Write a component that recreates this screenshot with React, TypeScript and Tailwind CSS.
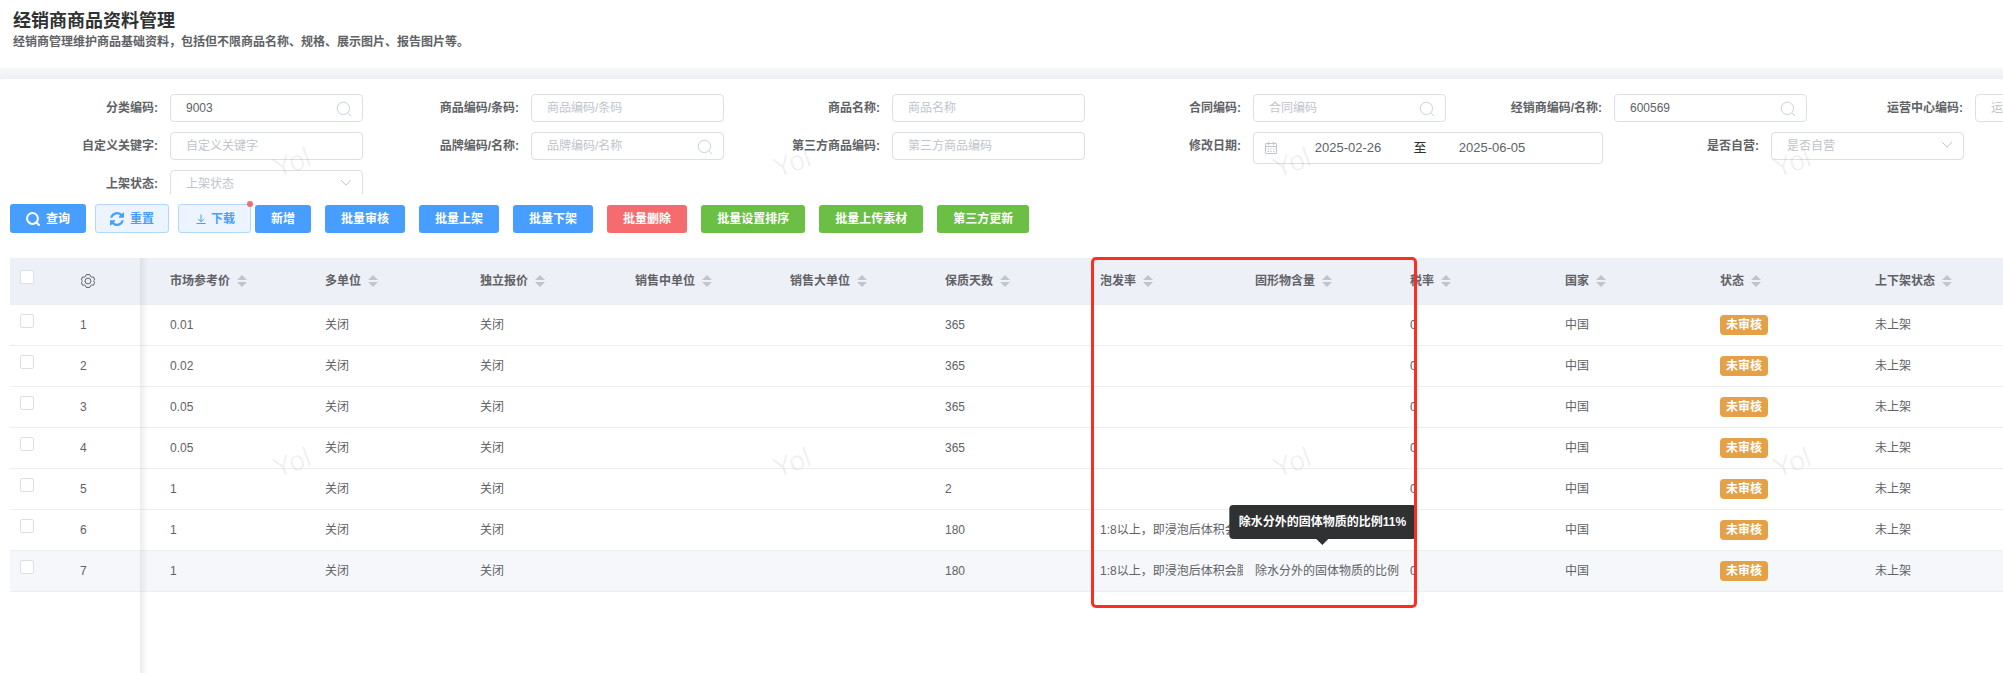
import { useId } from "react";

type Field = {
  label: string;
  value?: string;
  kind?: "text" | "search" | "select" | "date";
};

const fieldRows: Field[][] = [
  [
    { label: "分类编码", value: "9003", kind: "search" },
    { label: "商品编码/条码" },
    { label: "商品名称" },
    { label: "合同编码", kind: "search" },
    { label: "经销商编码/名称", value: "600569", kind: "search" },
    { label: "运营中心编码", kind: "search" },
  ],
  [
    { label: "自定义关键字" },
    { label: "品牌编码/名称", kind: "search" },
    { label: "第三方商品编码" },
    { label: "修改日期", kind: "date" },
    { label: "是否自营", kind: "select" },
  ],
  [{ label: "上架状态", kind: "select" }],
];

const actions = [
  { text: "新增", color: "bg-[#479eff]" },
  { text: "批量审核", color: "bg-[#479eff]" },
  { text: "批量上架", color: "bg-[#479eff]" },
  { text: "批量下架", color: "bg-[#479eff]" },
  { text: "批量删除", color: "bg-[#f46c6e]" },
  { text: "批量设置排序", color: "bg-[#6abf44]" },
  { text: "批量上传素材", color: "bg-[#6abf44]" },
  { text: "第三方更新", color: "bg-[#6abf44]" },
];

const columns = [
  "市场参考价",
  "多单位",
  "独立报价",
  "销售中单位",
  "销售大单位",
  "保质天数",
  "泡发率",
  "固形物含量",
  "税率",
  "国家",
  "状态",
  "上下架状态",
];

const soak = "1:8以上，即浸泡后体积会膨";
const solid = "除水分外的固体物质的比例11%";

const products = [
  { price: "0.01", days: "365", soak: "", solid: "" },
  { price: "0.02", days: "365", soak: "", solid: "" },
  { price: "0.05", days: "365", soak: "", solid: "" },
  { price: "0.05", days: "365", soak: "", solid: "" },
  { price: "1", days: "2", soak: "", solid: "" },
  { price: "1", days: "180", soak, solid: "" },
  { price: "1", days: "180", soak, solid },
];

const SearchIcon = ({ className, stroke }: { className: string; stroke: number }) => (
  <svg viewBox="0 0 16 16" fill="none" stroke="currentColor" strokeWidth={stroke} className={className}>
    <circle cx="7.4" cy="7.4" r="6.2" />
    <path d="M12 12l2.800 2.800" strokeLinecap="round" />
  </svg>
);

const RefreshIcon = () => (
  <svg viewBox="0 0 1536 1536" fill="currentColor" className="size-[14px]">
    <path d="M1511 928q0 5-1 7-64 268-268 434.500t-478 166.500q-146 0-282.500-55t-243.500-157l-129 129q-19 19-45 19t-45-19-19-45v-448q0-26 19-45t45-19h448q26 0 45 19t19 45-19 45l-137 137q71 66 161 102t187 36q134 0 250-65t186-179q11-17 53-117 8-23 30-23h192q13 0 22.500 9.500t9.500 22.500zm25-800v448q0 26-19 45t-45 19h-448q-26 0-45-19t-19-45 19-45l138-138q-148-137-349-137-134 0-250 65t-186 179q-11 17-53 117-8 23-30 23h-199q-13 0-22.500-9.500t-9.500-22.500v-7q65-268 270-434.500t480-166.500q146 0 284 55.500t245 156.500l130-129q19-19 45-19t45 19 19 45z" />
  </svg>
);

const ChevronIcon = () => (
  <svg
    viewBox="0 0 12 12"
    fill="none"
    stroke="currentColor"
    className="pointer-events-none absolute top-[7px] right-[11px] size-3 text-[#c0c4cc]"
  >
    <path d="M1.200 3.200L6 8.200l4.800-5" />
  </svg>
);

const CalendarIcon = () => (
  <svg viewBox="0 0 14 14" fill="none" stroke="currentColor" className="size-[14px] text-[#c0c4cc]">
    <rect x="1.500" y="2.500" width="11" height="10" rx="0.500" />
    <path d="M1.500 5.500h11M4.500 1v3M9.500 1v3M3.500 8h1.500M6.200 8h1.500M9 8h1.500M3.500 10.500h1.500M6.200 10.500h1.500M9 10.500h1.500" />
  </svg>
);

const DownloadIcon = () => (
  <svg viewBox="0 0 12 12" fill="none" stroke="currentColor" className="size-3">
    <path d="M6 1.500v7M3 5.800l3 3 3-3M1.500 10.500h9" />
  </svg>
);

const GearIcon = () => (
  <svg viewBox="0 0 14 14" fill="none" stroke="currentColor" className="size-[14px]">
    <path
      d="M5.200.6h3.600l.8 1.900 1 .6 2-.2 1 3.100-1.100 1v.1l1.100 1.100-1 3-2-.2-1 .6-.8 1.800H5.200l-.8-1.800-1-.6-2 .2-1-3L1.500 7.100V7L.4 6l1-3.100 2 .2 1-.6z"
      strokeLinejoin="round"
    />
    <circle cx="7" cy="7" r="2.900" />
  </svg>
);

const SortIcon = () => (
  <svg viewBox="0 0 10 12" fill="#c0c4cc" className="h-3 w-[10px]">
    <path d="M5 0l5 5H0zM5 12L0 7h10z" />
  </svg>
);

const inputClass =
  "h-7 w-full rounded border border-[#dcdfe6] bg-white px-[15px] text-[#606266] outline-none placeholder:text-[#c0c4cc]";

const FormField = ({ label, value, kind = "text" }: Field) => {
  const id = useId();

  return (
    <div className="flex shrink-0 items-start">
      <label htmlFor={id} className="w-[168px] pr-3 text-right leading-7 font-bold text-[#606266]">
        {label}:
      </label>
      {kind === "date" ? (
        <div className="flex h-8 w-[350px] items-center rounded border border-[#dcdfe6] bg-white pl-[10px] text-[13px]">
          <CalendarIcon />
          <input
            id={id}
            defaultValue="2025-02-26"
            className="ml-[10px] w-[120px] text-center text-[#606266] outline-none"
          />
          <span className="w-6 text-center text-[#303133]">至</span>
          <input
            aria-label="结束日期"
            defaultValue="2025-06-05"
            className="w-[120px] text-center text-[#606266] outline-none"
          />
        </div>
      ) : (
        <div className="relative w-[193px]">
          {kind === "select" ? (
            <>
              <select id={id} className={`${inputClass} appearance-none text-[#c0c4cc]!`}>
                <option>{label}</option>
              </select>
              <ChevronIcon />
            </>
          ) : (
            <input id={id} defaultValue={value} placeholder={label} className={inputClass} />
          )}
          {kind === "search" && (
            <SearchIcon
              stroke={1}
              className="pointer-events-none absolute top-[7px] right-[11px] size-4 text-[#c8d3e3]"
            />
          )}
        </div>
      )}
    </div>
  );
};

const Toolbar = () => (
  <div className="mt-[10px] flex items-end pl-[10px] font-bold">
    <button className="flex h-[29px] items-center gap-[6px] rounded-[3px] bg-[#479eff] px-4 text-white">
      <SearchIcon stroke={2.3} className="size-[14px]" />
      查询
    </button>
    <button className="ml-[9px] flex h-[29px] items-center gap-[6px] rounded-[3px] border border-[#b3d8ff] bg-[#ecf5ff] px-[14px] text-[#479eff]">
      <RefreshIcon />
      重置
    </button>
    <button className="relative ml-[9px] flex h-[29px] items-center gap-1 rounded-[3px] border border-[#b3d8ff] bg-[#ecf5ff] pr-[15px] pl-4 text-[#479eff]">
      <DownloadIcon />
      下载
      <span className="absolute -top-1 -right-[3px] size-[6px] rounded-full bg-[#f46c6e]" />
    </button>
    <div className="ml-1 flex gap-[14px]">
      {actions.map((a) => (
        <button key={a.text} className={`h-7 rounded-[3px] px-4 text-white ${a.color}`}>
          {a.text}
        </button>
      ))}
    </div>
  </div>
);

const checkboxClass = "block size-[14px] appearance-none rounded-[2px] border border-[#dcdfe6] bg-white";

const ProductTable = () => (
  <table className="w-[2010px] table-fixed border-collapse text-left text-[#606266]">
    <colgroup>
      <col className="w-[50px]" />
      <col className="w-[100px]" />
      {columns.map((c) => (
        <col key={c} className="w-[155px]" />
      ))}
    </colgroup>
    <thead>
      <tr className="h-[46px] border-b border-[#ebeef5] bg-[#edf0f6]">
        <th className="pt-3 pl-[10px] align-top">
          <input type="checkbox" aria-label="全选" className={checkboxClass} />
        </th>
        <th className="pl-[21px]">
          <button aria-label="列设置" className="block">
            <GearIcon />
          </button>
        </th>
        {columns.map((c) => (
          <th key={c} className="pl-[10px] font-bold">
            <span className="flex items-center gap-[7px]">
              {c}
              <SortIcon />
            </span>
          </th>
        ))}
      </tr>
    </thead>
    <tbody>
      {products.map((p, i) => (
        <tr
          key={i}
          className={`h-[41px] border-b border-[#ebeef5] ${i === products.length - 1 ? "bg-[#f5f7fb]" : "bg-white"}`}
        >
          <td className="pt-[9px] pl-[10px] align-top">
            <input type="checkbox" aria-label={`选择第${i + 1}行`} className={checkboxClass} />
          </td>
          <td className="pl-5">{i + 1}</td>
          <td className="pl-[10px]">{p.price}</td>
          <td className="pl-[10px]">关闭</td>
          <td className="pl-[10px]">关闭</td>
          <td />
          <td />
          <td className="pl-[10px]">{p.days}</td>
          <td className="pr-[2px] pl-[10px]">
            <div className="overflow-hidden whitespace-nowrap">{p.soak}</div>
          </td>
          <td className="relative pr-px pl-[10px]">
            <div className="overflow-hidden whitespace-nowrap">{p.solid}</div>
            {p.solid && <Tooltip text={p.solid} />}
          </td>
          <td className="pl-[10px]">0</td>
          <td className="pl-[10px]">中国</td>
          <td className="pl-[10px]">
            <span className="inline-block h-5 rounded bg-[#e4a147] px-[6px] align-middle leading-5 font-bold text-white">
              未审核
            </span>
          </td>
          <td className="pl-[10px]">未上架</td>
        </tr>
      ))}
    </tbody>
  </table>
);

const Tooltip = ({ text }: { text: string }) => (
  <div
    role="tooltip"
    className="absolute bottom-full left-1/2 z-10 mb-3 -translate-x-1/2 rounded bg-[#303133] px-[10px] leading-[34px] font-bold whitespace-nowrap text-white"
  >
    {text}
    <span className="absolute top-full left-1/2 -translate-x-1/2 border-x-6 border-t-6 border-x-transparent border-t-[#303133]" />
  </div>
);

// Diagonal text repeated over the whole page
const Watermark = () => (
  <div className="pointer-events-none absolute inset-0 z-20 overflow-hidden">
    {["top-[143px]", "top-[443px]"].map((top) => (
      <div key={top} className={`absolute left-[272px] flex gap-[460px] text-[28px] leading-10 text-black/6 ${top}`}>
        {[0, 1, 2, 3].map((n) => (
          <span key={n} className="w-10 shrink-0 -rotate-20 text-center">
            Yol
          </span>
        ))}
      </div>
    ))}
  </div>
);

const App = () => {
  return (
    <div className="relative flex min-h-screen flex-col overflow-hidden bg-[#f5f7fa] font-['Liberation_Sans','Noto_Sans_CJK_SC',sans-serif] text-xs">
      <header className="h-[68px] bg-white pt-[9px] pl-[13px] font-bold">
        <h1 className="text-lg leading-6 text-[#303133]">经销商商品资料管理</h1>
        <p className="leading-[18px] text-[#606266]">经销商管理维护商品基础资料，包括但不限商品名称、规格、展示图片、报告图片等。</p>
      </header>
      <div className="h-[11px] bg-linear-to-b from-[#f7f8fa] to-[#edeff2]" />

      <main className="flex flex-1 flex-col rounded-t bg-white pt-[15px]">
        <form className="flex h-[100px] flex-col gap-[10px] overflow-hidden pl-[2px]">
          {fieldRows.map((row, i) => (
            <div key={i} className="flex h-7 shrink-0">
              {row.map((f) => (
                <FormField key={f.label} {...f} />
              ))}
            </div>
          ))}
        </form>

        <Toolbar />

        <div className="relative mt-[25px] ml-[10px] flex-1">
          <ProductTable />
          {/* Edge of the frozen columns */}
          <div className="pointer-events-none absolute inset-y-0 left-[130px] w-2 bg-linear-to-r from-black/7 to-transparent" />
          <div className="pointer-events-none absolute -top-px left-[1081px] z-20 h-[351px] w-[326px] rounded-[5px] border-3 border-[#ff2d20]" />
        </div>
      </main>

      <Watermark />
    </div>
  );
};

export default App;
